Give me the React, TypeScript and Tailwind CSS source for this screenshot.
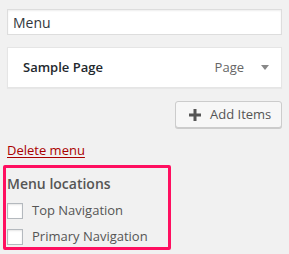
import React from "react";

export default function App() {
  return (
    <div
      className="w-[289px] h-[254px] bg-[#f1f1f1] px-[7px] pt-[9px] overflow-hidden text-[#444]"
      style={{ fontFamily: '"Open Sans", sans-serif' }}
    >
      <div className="h-[26px] border border-[#ddd] bg-white flex items-center pl-[5px] text-[14px] text-[#32373c] shadow-[inset_0_1px_2px_rgba(0,0,0,0.07)]">
        Menu
      </div>

      <div className="mt-[12px] h-[41px] border border-[#e5e5e5] bg-white flex items-center pl-[15px] pr-[12px] shadow-[0_1px_1px_rgba(0,0,0,0.04)]">
        <span className="text-[13px] font-semibold text-[#23282d]">Sample Page</span>
        <span className="ml-auto text-[13px] text-[#666]">Page</span>
        <svg width="8" height="5" viewBox="0 0 8 5" className="ml-[17px]">
          <path d="M0 0 L8 0 L4 5 Z" fill="#888" />
        </svg>
      </div>

      <div className="mt-[13px] flex justify-end">
        <button className="h-[27px] w-[107px] rounded-[3px] border border-[#ccc] bg-[#f7f7f7] shadow-[0_1px_0_#ccc] flex items-center pl-[13px] text-[13px] text-[#555]">
          <svg width="12" height="12" viewBox="0 0 12 12" className="mr-[9px]">
            <path d="M4.5 0h3v4.5H12v3H7.5V12h-3V7.5H0v-3h4.5z" fill="#555" />
          </svg>
          Add Items
        </button>
      </div>

      <div className="mt-[13px] text-[13px] leading-[18px]">
        <a className="text-[#a00] underline underline-offset-[2px]">Delete menu</a>
      </div>

      <div className="mt-[6px] -ml-[4px] w-[168px] border-[3px] border-[#ff0f60] rounded-[2px] pl-px pt-[6px] pb-[2px]">
        <div className="text-[14px] font-semibold leading-[20px] text-[#555]">Menu locations</div>
        <div className="mt-[9px] flex items-center h-[16px]">
          <span className="w-[16px] h-[16px] border border-[#b4b9be] bg-white shadow-[inset_0_1px_2px_rgba(0,0,0,0.1)]" />
          <span className="ml-[9px] text-[13px] text-[#555]">Top Navigation</span>
        </div>
        <div className="mt-[10px] flex items-center h-[16px]">
          <span className="w-[16px] h-[16px] border border-[#b4b9be] bg-white shadow-[inset_0_1px_2px_rgba(0,0,0,0.1)]" />
          <span className="ml-[9px] text-[13px] text-[#555]">Primary Navigation</span>
        </div>
      </div>
    </div>
  );
}
